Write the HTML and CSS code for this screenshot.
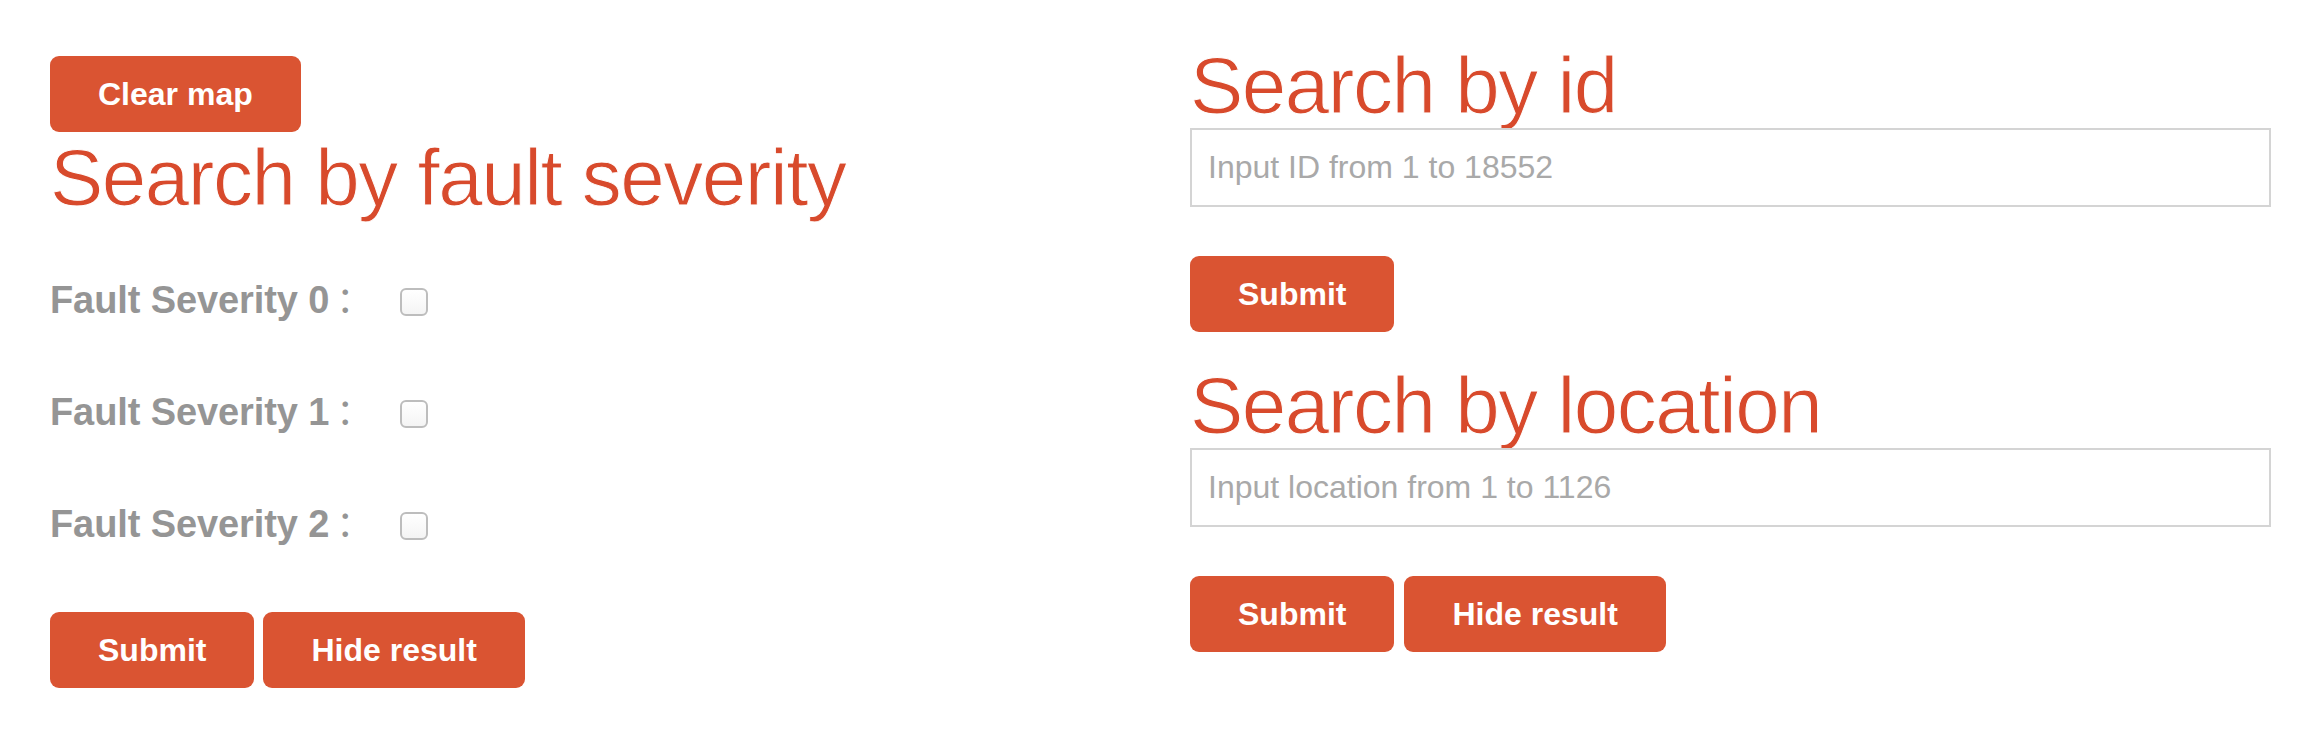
FILE: index.html
```html
<!DOCTYPE html>
<html lang="en">
<head>
<meta charset="utf-8">
<title>Search</title>
<link rel="stylesheet" href="styles.css">
</head>
<body>
<div class="page">
  <section class="col col-left">
    <button class="btn">Clear map</button>
    <h1 class="title">Search by fault severity</h1>
    <div class="rows">
      <label class="row"><span class="lbl">Fault Severity 0<span class="colon">：</span></span><input type="checkbox" class="chk"></label>
      <label class="row"><span class="lbl">Fault Severity 1<span class="colon">：</span></span><input type="checkbox" class="chk"></label>
      <label class="row"><span class="lbl">Fault Severity 2<span class="colon">：</span></span><input type="checkbox" class="chk"></label>
    </div>
    <div class="actions actions-left">
      <button class="btn">Submit</button>
      <button class="btn">Hide result</button>
    </div>
  </section>
  <section class="col col-right">
    <h1 class="title">Search by id</h1>
    <input class="field" type="text" placeholder="Input ID from 1 to 18552">
    <div class="actions">
      <button class="btn">Submit</button>
    </div>
    <h1 class="title title-gap">Search by location</h1>
    <input class="field" type="text" placeholder="Input location from 1 to 1126">
    <div class="actions">
      <button class="btn">Submit</button>
      <button class="btn">Hide result</button>
    </div>
  </section>
</div>
</body>
</html>
```

FILE: styles.css
```css
html, body {
  margin: 0;
  padding: 0;
  background: #ffffff;
}

body {
  font-family: "Liberation Sans", Arial, "Noto Sans CJK SC", sans-serif;
}

.page {
  display: grid;
  grid-template-columns: 1140px 1080px;
  padding: 44px 0 0 50px;
}

.col {
  display: flex;
  flex-direction: column;
  align-items: flex-start;
}

.col-left {
  padding-top: 12px;
}

.btn {
  height: 76px;
  padding: 0 48px;
  border: none;
  border-radius: 9px;
  background: #da5432;
  color: #ffffff;
  font-family: "Liberation Sans", Arial, sans-serif;
  font-weight: 700;
  font-size: 32px;
  line-height: 76px;
  cursor: pointer;
}

.title {
  margin: 0;
  color: #d84a2c;
  font-family: "Liberation Sans", Arial, sans-serif;
  font-weight: 400;
  font-size: 80px;
  line-height: 84px;
  letter-spacing: -1.5px;
  white-space: nowrap;
  -webkit-text-stroke: 1px #ffffff;
}

.col-left .title {
  margin-top: 4px;
}

.rows {
  display: flex;
  flex-direction: column;
  gap: 56px;
  margin-top: 50px;
}

.row {
  display: flex;
  align-items: center;
  height: 56px;
}

.lbl {
  color: #959595;
  font-weight: 700;
  font-size: 38px;
  line-height: 56px;
  letter-spacing: -0.1px;
  white-space: nowrap;
}

.colon {
  font-family: "Noto Sans CJK SC", sans-serif;
  font-weight: 400;
  font-size: 36px;
  margin-left: 7px;
}

.chk {
  appearance: none;
  -webkit-appearance: none;
  width: 28px;
  height: 28px;
  margin: 8px 0 0 28px;
  border: 2px solid #bdbdbd;
  border-radius: 6px;
  background: linear-gradient(#ffffff, #f4f4f4);
  box-sizing: border-box;
}

.actions {
  display: flex;
  gap: 10px;
  margin-top: 49px;
}

.actions-left {
  margin-top: 62px;
  gap: 9px;
}

.field {
  box-sizing: border-box;
  width: 1081px;
  height: 79px;
  margin: 0;
  padding: 0 16px;
  border: 2px solid #d4d4d4;
  border-radius: 0;
  font-family: "Liberation Sans", Arial, sans-serif;
  font-size: 32px;
  color: #555555;
  outline: none;
}

.field::placeholder {
  color: #a9a9a9;
}

.title-gap {
  margin-top: 32px;
}
```
